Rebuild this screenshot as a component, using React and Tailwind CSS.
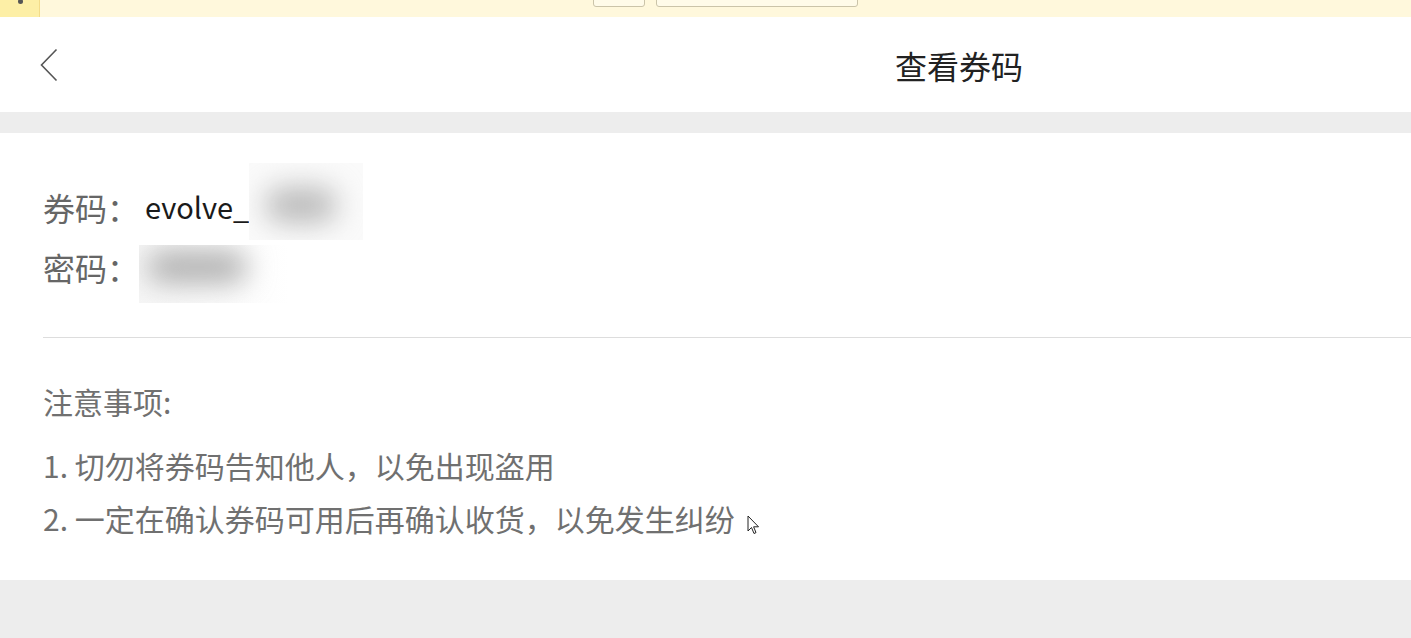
const cjk = "font-['Noto_Sans_CJK_SC','Noto_Sans',sans-serif]"

function TopBar() {
  return (
    <div className="h-[17px] bg-[#fff8dc] flex overflow-hidden">
      <div className="w-[40px] shrink-0 bg-[#fdefa6] border-r border-[#f3dc8a] flex justify-center">
        <div className="w-[5px] h-[5px] rounded-full bg-[#555] -mt-[1px] ml-[1px]" />
      </div>
      <div className="ml-[553px] w-[52px] h-[30px] -mt-[23px] border border-[#cbc4a9] rounded-[3px] bg-[#fffbe9]" />
      <div className="ml-[11px] w-[202px] h-[30px] -mt-[23px] border border-[#cbc4a9] rounded-[3px] bg-[#fffbe9]" />
    </div>
  )
}

function Header() {
  return (
    <div className="bg-white h-[95px] w-[1918px] grid grid-cols-[1fr_auto_1fr] items-center">
      <div className="pl-[40px]">
        <svg width="18" height="34" viewBox="0 0 18 34" fill="none">
          <path d="M16.5 1.5 L1.5 17 L16.5 32.5" stroke="#555" strokeWidth="1.6" />
        </svg>
      </div>
      <h1 className="text-[32px] leading-none text-[#222] font-normal">查看券码</h1>
      <div />
    </div>
  )
}

export default function App() {
  return (
    <div className={`${cjk} min-h-[638px] bg-[#ededed] overflow-hidden`}>
      <TopBar />
      <Header />
      <div className="h-[21px]" />

      <div className="bg-white pt-[44px] pb-[35px]">
        <div className="pl-[43px]">
          <div className="h-[60px] flex items-center text-[32px]">
            <span className="text-[#666]">券码：</span>
            <span className="text-[#1a1a1a] text-[29px] ml-[6px]">evolve_</span>
            <span className="relative block shrink-0 overflow-hidden w-[114px] h-[77px] mt-[-12px] bg-[#fafafa]">
              <span className="absolute rounded-full blur-[14px] bg-[#bbbbbb] left-[16px] top-[24px] w-[72px] h-[36px]" />
            </span>
          </div>
          <div className="h-[60px] flex items-center text-[32px]">
            <span className="text-[#666]">密码：</span>
            <span className="relative block shrink-0 overflow-hidden w-[150px] h-[58px] mt-[14px] bg-gradient-to-r from-[#f6f6f6] to-white">
              <span className="absolute rounded-full blur-[14px] bg-[#b0b0b0] left-[8px] top-[6px] w-[100px] h-[32px]" />
            </span>
          </div>
        </div>

        <div className="ml-[43px] mt-[40px] border-t border-[#dddddd]" />

        <div className="pl-[43px] pt-[37px] text-[#707070] text-[30px] leading-[53px]">
          <p className="mb-[11px]">注意事项:</p>
          <p>1. 切勿将券码告知他人，以免出现盗用</p>
          <p className="flex items-center">
            <span>2. 一定在确认券码可用后再确认收货，以免发生纠纷</span>
            <svg className="ml-[12px] mt-[14px]" width="13" height="21" viewBox="0 0 13 21">
              <path d="M1 1 L1 16 L4.5 12.5 L7 18.5 L9 17.6 L6.6 11.8 L11.5 11.8 Z" fill="#fff" stroke="#222" strokeWidth="1" strokeLinejoin="round" />
            </svg>
          </p>
        </div>
      </div>
    </div>
  )
}
